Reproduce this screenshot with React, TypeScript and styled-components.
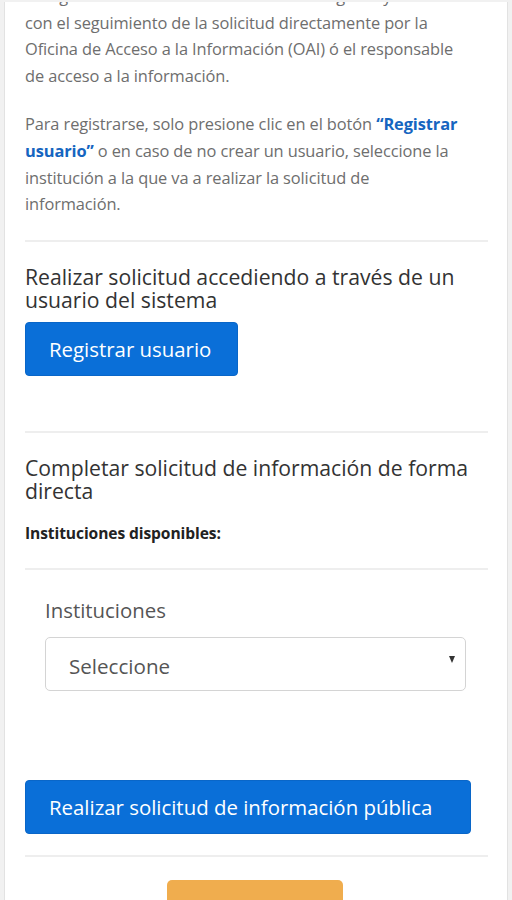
import React from "react";
import styled, { createGlobalStyle } from "styled-components";

const GlobalStyle = createGlobalStyle`
    html, body {
        margin: 0;
        padding: 0;
        background: #f1f1f1;
    }
    body {
        font-family: 'Open Sans', 'Noto Sans', sans-serif;
    }
`

export const PageDiv = styled.div`
    width: 512px;
    height: 900px;
    overflow: hidden;
    background: #f1f1f1;
    padding: 2px 4px 0 4px;
    box-sizing: border-box;
`
export const CardDiv = styled.div`
    background: #ffffff;
    border-left: 1px solid #e2e2e2;
    border-right: 1px solid #e2e2e2;
    height: 100%;
    overflow: hidden;
    padding: 0 19px 0 20px;
    box-sizing: border-box;
`
export const ScrolledDiv = styled.div`
    margin-top: -19px;
    display: flex;
    flex-direction: column;
`
export const TextP = styled.p`
    margin: 0 0 22px 0;
    font-size: 16.4px;
    line-height: 26.6px;
    color: #6e6e6e;
    white-space: nowrap;
    letter-spacing: -0.1px;
`
export const LinkSpan = styled.span`
    color: #1565c0;
    font-weight: 700;
`
export const DividerHr = styled.hr<{ $top: number }>`
    border: none;
    border-top: 2px solid #eeeeee;
    margin: ${({ $top }) => $top}px 0 0 0;
    width: 100%;
`
export const SectionTitleH = styled.h3`
    margin: 23px 0 0 0;
    font-size: 21.2px;
    font-weight: 400;
    line-height: 23.5px;
    color: #333333;
    white-space: nowrap;
`
export const PrimaryButton = styled.button<{ $wide?: boolean }>`
    align-self: flex-start;
    background: #0a6fd8;
    border: 1px solid #0966c8;
    border-radius: 4px;
    color: #ffffff;
    font-family: 'Open Sans', 'Noto Sans', sans-serif;
    font-size: 20.4px;
    height: 54px;
    padding: 0 0 0 23px;
    width: ${({ $wide }) => ($wide ? "446px" : "213px")};
    text-align: left;
    white-space: nowrap;
    cursor: pointer;
`
export const BoldLabel = styled.div`
    margin-top: 19px;
    font-size: 15.6px;
    font-weight: 700;
    color: #222222;
    line-height: 22px;
    letter-spacing: -0.1px;
`
export const FieldDiv = styled.div`
    padding: 0 20px;
    display: flex;
    flex-direction: column;
`
export const FieldLabel = styled.label`
    margin-top: 28px;
    font-size: 20.4px;
    line-height: 24px;
    color: #555555;
`
export const SelectBox = styled.div`
    margin-top: 15px;
    height: 54px;
    width: 421px;
    box-sizing: border-box;
    border: 1px solid #d4d4d4;
    border-radius: 5px;
    display: flex;
    align-items: center;
    justify-content: space-between;
    padding: 4px 10px 0 23px;
    font-size: 20.6px;
    color: #555555;
`
export const CaretSpan = styled.span`
    width: 0;
    height: 0;
    border-left: 3.5px solid transparent;
    border-right: 3.5px solid transparent;
    border-top: 7px solid #333333;
    margin-top: -12px;
`
export const OrangeButton = styled.div`
    align-self: center;
    margin: 23px 0 0 -4px;
    width: 176px;
    height: 40px;
    background: #f0ad4e;
    border-radius: 5px 5px 0 0;
`
export const Spacer = styled.div<{ $h: number }>`
    height: ${({ $h }) => $h}px;
    flex: none;
`

export default function App() {
    return (
        <>
            <GlobalStyle />
            <PageDiv>
                <CardDiv>
                    <ScrolledDiv>
                        <TextP>
                            Al registrarse tendrá acceso a llevar un registro y
                            <br />
                            con el seguimiento de la solicitud directamente por la
                            <br />
                            Oficina de Acceso a la Información (OAI) ó el responsable
                            <br />
                            de acceso a la información.
                        </TextP>
                        <TextP>
                            Para registrarse, solo presione clic en el botón <LinkSpan>“Registrar</LinkSpan>
                            <br />
                            <LinkSpan>usuario”</LinkSpan> o en caso de no crear un usuario, seleccione la
                            <br />
                            institución a la que va a realizar la solicitud de
                            <br />
                            información.
                        </TextP>
                        <DividerHr $top={0} />
                        <SectionTitleH>
                            Realizar solicitud accediendo a través de un
                            <br />
                            usuario del sistema
                        </SectionTitleH>
                        <Spacer $h={10} />
                        <PrimaryButton>Registrar usuario</PrimaryButton>
                        <DividerHr $top={55} />
                        <SectionTitleH>
                            Completar solicitud de información de forma
                            <br />
                            directa
                        </SectionTitleH>
                        <BoldLabel>Instituciones disponibles:</BoldLabel>
                        <DividerHr $top={24} />
                        <FieldDiv>
                            <FieldLabel>Instituciones</FieldLabel>
                            <SelectBox>
                                Seleccione
                                <CaretSpan />
                            </SelectBox>
                        </FieldDiv>
                        <Spacer $h={89} />
                        <PrimaryButton $wide>Realizar solicitud de información pública</PrimaryButton>
                        <DividerHr $top={21} />
                        <OrangeButton />
                    </ScrolledDiv>
                </CardDiv>
            </PageDiv>
        </>
    );
}
